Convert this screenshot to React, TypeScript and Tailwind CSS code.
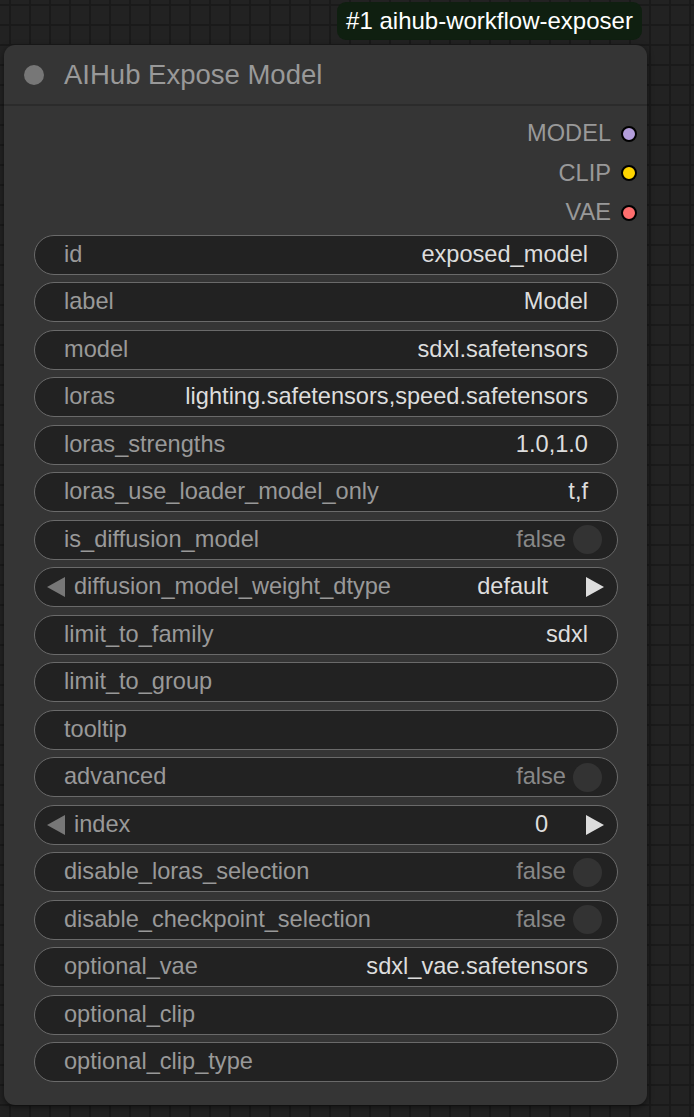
const outputs = [
  { name: "MODEL", color: "bg-[#b39ddb]" },
  { name: "CLIP", color: "bg-[#ffd500]" },
  { name: "VAE", color: "bg-[#ff6e6e]" },
]

type Widget =
  | { kind: "text"; label: string; value?: string }
  | { kind: "toggle"; label: string }
  | { kind: "combo"; label: string; value: string }

const widgets: Widget[] = [
  { kind: "text", label: "id", value: "exposed_model" },
  { kind: "text", label: "label", value: "Model" },
  { kind: "text", label: "model", value: "sdxl.safetensors" },
  { kind: "text", label: "loras", value: "lighting.safetensors,speed.safetensors" },
  { kind: "text", label: "loras_strengths", value: "1.0,1.0" },
  { kind: "text", label: "loras_use_loader_model_only", value: "t,f" },
  { kind: "toggle", label: "is_diffusion_model" },
  { kind: "combo", label: "diffusion_model_weight_dtype", value: "default" },
  { kind: "text", label: "limit_to_family", value: "sdxl" },
  { kind: "text", label: "limit_to_group" },
  { kind: "text", label: "tooltip" },
  { kind: "toggle", label: "advanced" },
  { kind: "combo", label: "index", value: "0" },
  { kind: "toggle", label: "disable_loras_selection" },
  { kind: "toggle", label: "disable_checkpoint_selection" },
  { kind: "text", label: "optional_vae", value: "sdxl_vae.safetensors" },
  { kind: "text", label: "optional_clip" },
  { kind: "text", label: "optional_clip_type" },
]

function WidgetRow({ w }: { w: Widget }) {
  if (w.kind === "combo") {
    return (
      <div className="flex h-[40px] items-center rounded-full border-[1.5px] border-[#6a6a6a] bg-[#222222] pl-[11px] pr-[12px]">
        <svg width="20" height="22" viewBox="0 0 20 22" className="shrink-0">
          <path d="M19 1 L1 11 L19 21 Z" fill="#777777" />
        </svg>
        <span className="ml-[8px] text-[#999999]">{w.label}</span>
        <span className="ml-auto text-[#dddddd]">{w.value}</span>
        <svg width="20" height="22" viewBox="0 0 20 22" className="ml-[37px] shrink-0">
          <path d="M1 1 L19 11 L1 21 Z" fill="#dddddd" />
        </svg>
      </div>
    )
  }
  if (w.kind === "toggle") {
    return (
      <div className="flex h-[40px] items-center rounded-full border-[1.5px] border-[#6a6a6a] bg-[#222222] pl-[29px] pr-[15px]">
        <span className="text-[#999999]">{w.label}</span>
        <span className="ml-auto text-[#888888]">false</span>
        <span className="ml-[7px] h-[29px] w-[29px] rounded-full bg-[#333333]" />
      </div>
    )
  }
  return (
    <div className="flex h-[40px] items-center rounded-full border-[1.5px] border-[#6a6a6a] bg-[#222222] pl-[29px] pr-[29px]">
      <span className="text-[#999999]">{w.label}</span>
      {w.value && <span className="ml-auto text-[#dddddd]">{w.value}</span>}
    </div>
  )
}

export default function App() {
  return (
    <div
      className="relative h-[1117px] w-[694px] overflow-hidden bg-[#222222] bg-[linear-gradient(to_right,#1a1a1a_2px,transparent_2px),linear-gradient(to_bottom,#1a1a1a_2px,transparent_2px)] bg-[size:20px_20px] bg-[position:9px_4px]"
      style={{ fontFamily: '"Liberation Sans", Arial, sans-serif' }}
    >
      {/* node badge */}
      <div className="absolute left-[337px] top-[2px] flex h-[38px] w-[305px] items-center justify-center rounded-[9px] bg-[#0f1f10] text-[24px] text-white">
        #1 aihub-workflow-exposer
      </div>

      {/* node */}
      <div className="absolute left-[4px] top-[45px] w-[643px] rounded-[11px] bg-[#353535] shadow-[0_2px_6px_rgba(0,0,0,0.5)]">
        <div className="flex h-[61px] items-center border-b-2 border-[#2b2b2b] pl-[20px]">
          <span className="h-[20px] w-[20px] rounded-full bg-[#777777]" />
          <span className="ml-[20px] text-[27.5px] text-[#999999]">AIHub Expose Model</span>
        </div>

        <div className="flex flex-col pt-[8px] text-[23.6px]">
          {outputs.map((o) => (
            <div key={o.name} className="flex h-[39.5px] items-center justify-end pr-[10px]">
              <span className="text-[#999999]">{o.name}</span>
              <span className={`ml-[10px] h-[16px] w-[16px] rounded-full border-2 border-black ${o.color}`} />
            </div>
          ))}
        </div>

        <div className="mt-[2px] flex flex-col gap-[7.5px] pb-[23px] pl-[30px] pr-[29px] text-[23.6px]">
          {widgets.map((w) => (
            <WidgetRow key={w.label} w={w} />
          ))}
        </div>
      </div>
    </div>
  )
}
